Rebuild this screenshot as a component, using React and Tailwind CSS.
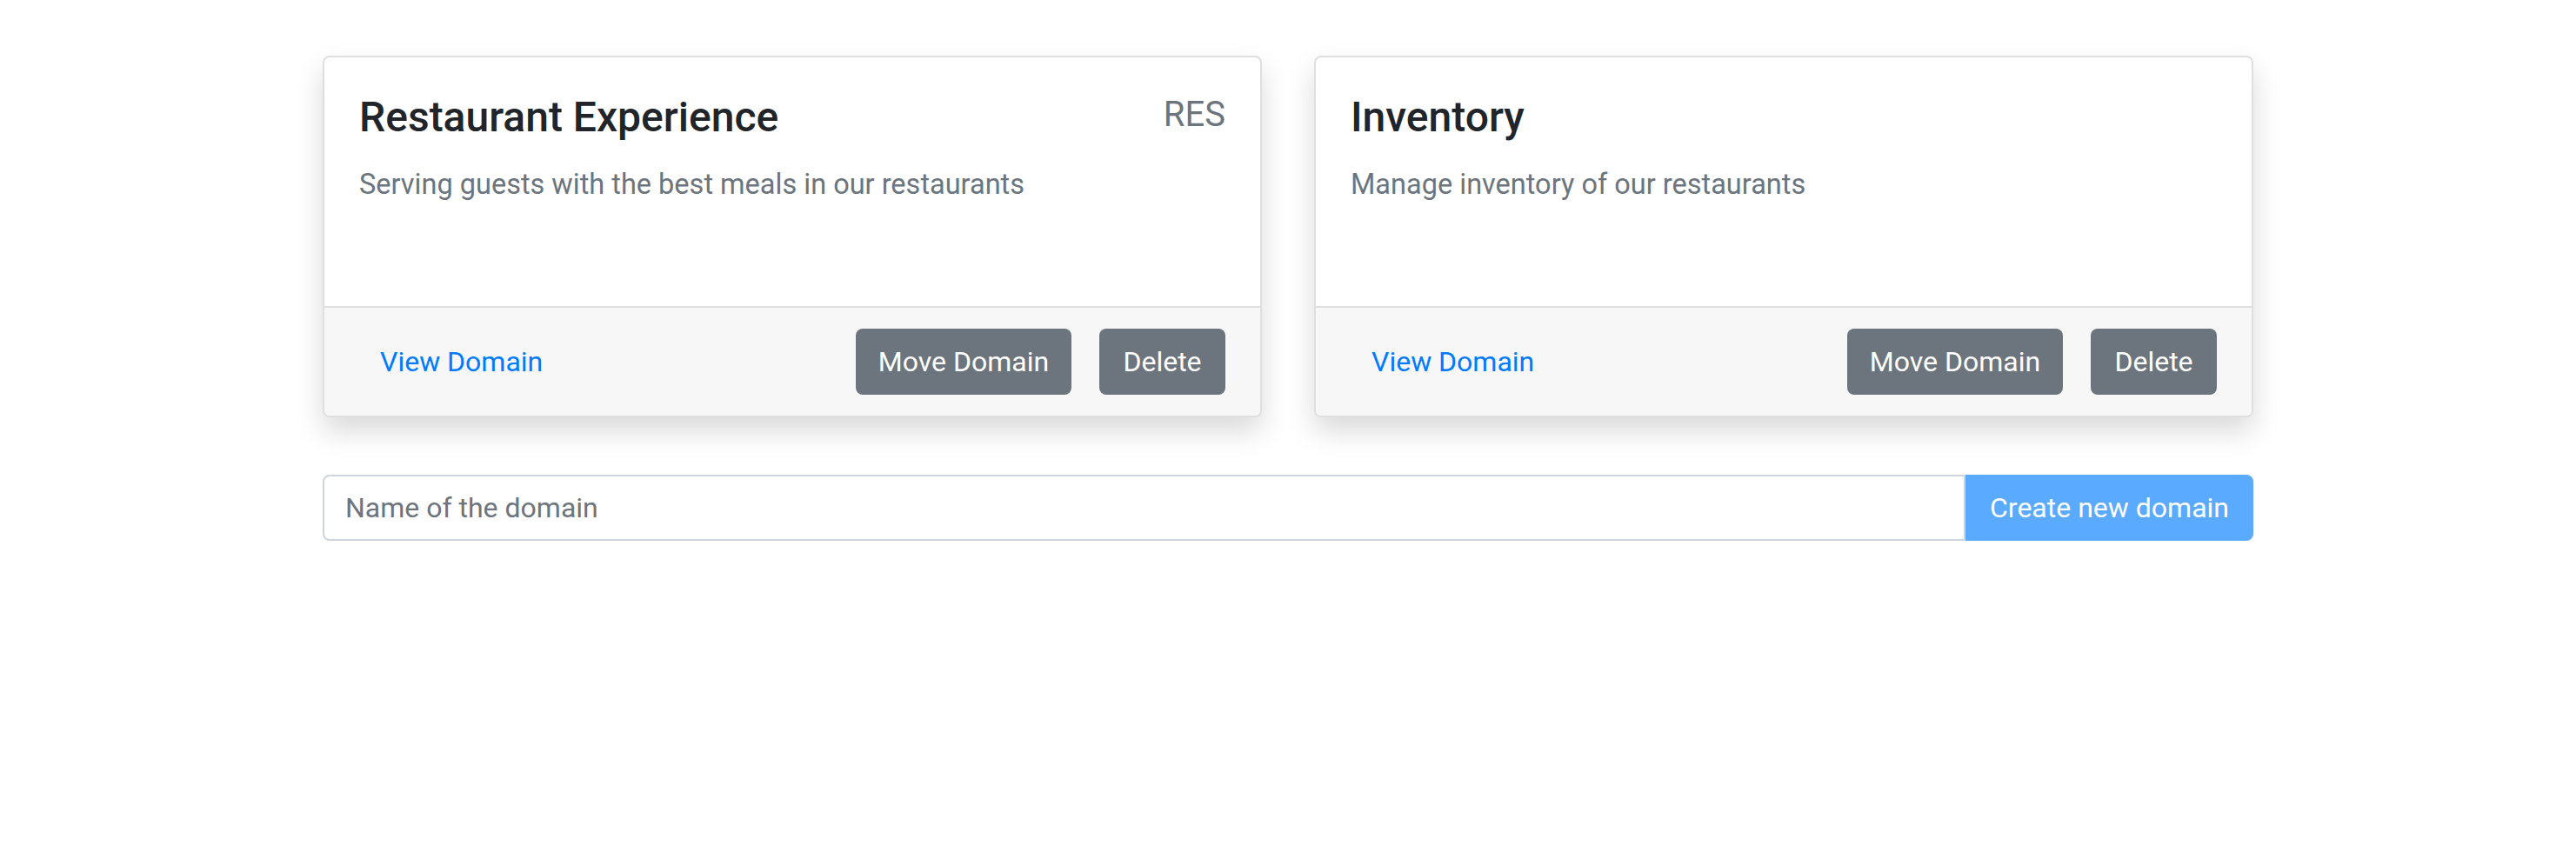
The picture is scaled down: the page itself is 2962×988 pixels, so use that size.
import React from "react";

const domains = [
  {
    name: "Restaurant Experience",
    description: "Serving guests with the best meals in our restaurants",
    code: "RES",
  },
  {
    name: "Inventory",
    description: "Manage inventory of our restaurants",
    code: "",
  },
];

function DomainCard({ domain }) {
  return (
    <div className="flex h-[416px] flex-col overflow-hidden rounded-[8px] border-2 border-[#dfdfdf] bg-white shadow-[0_16px_32px_rgba(0,0,0,0.15)]">
      <div className="flex-1 px-[40px] pt-[40px]">
        <div className="flex items-start justify-between">
          <h4 className="text-[48px] leading-[58px] font-medium text-[#212529]">
            {domain.name}
          </h4>
          {domain.code && (
            <span className="pt-[2px] text-[40px] leading-[48px] text-[#6c757d]">
              {domain.code}
            </span>
          )}
        </div>
        <p className="mt-[24px] text-[32.5px] leading-[48px] text-[#6c757d]">
          {domain.description}
        </p>
      </div>
      <div className="flex h-[126px] items-center justify-between border-t-2 border-[#dfdfdf] bg-[#f7f7f7] px-[40px]">
        <button className="px-[24px] py-[12px] text-[32px] leading-[48px] text-[#007bff]">
          View Domain
        </button>
        <div className="flex items-center gap-[32px]">
          <button className="h-[76px] w-[248px] rounded-[8px] bg-[#6c757d] text-[32px] text-white">
            Move Domain
          </button>
          <button className="h-[76px] w-[145px] rounded-[8px] bg-[#6c757d] text-[32px] text-white">
            Delete
          </button>
        </div>
      </div>
    </div>
  );
}

export default function App() {
  return (
    <div className="min-h-[988px] w-full bg-white font-['Roboto','Liberation_Sans',sans-serif]">
      <div className="mx-auto w-[2220px] pt-[64px]">
        <div className="grid grid-cols-2 gap-[60px]">
          {domains.map((d) => (
            <DomainCard key={d.name} domain={d} />
          ))}
        </div>
        <div className="mt-[66px] flex h-[76px]">
          <input
            className="h-full flex-1 rounded-l-[8px] border-2 border-[#ced4da] px-[24px] text-[32px] text-[#495057] outline-none placeholder:text-[#6c757d]"
            placeholder="Name of the domain"
          />
          <button className="h-full w-[331px] rounded-r-[8px] bg-[#5aaaff] text-[32px] text-white">
            Create new domain
          </button>
        </div>
      </div>
    </div>
  );
}
